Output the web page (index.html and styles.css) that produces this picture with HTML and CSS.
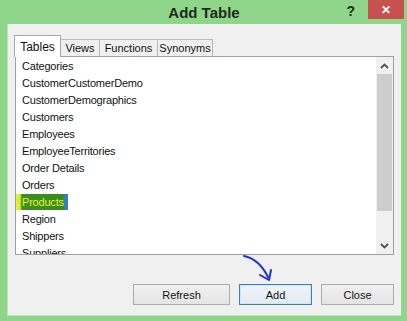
FILE: index.html
```html
<!DOCTYPE html>
<html lang="en">
<head>
  <meta charset="UTF-8" />
  <title>Add Table</title>
  <link rel="stylesheet" href="styles.css">
</head>
<body>
  <div class="window">
    <!-- Title bar -->
    <div class="titlebar">
      <span class="title">Add Table</span>
      <span class="help">?</span>
      <span class="close">&#x2715;</span>
    </div>

    <div class="client">
      <!-- Tabs -->
      <div class="tabs">
        <div class="tab active tab-tables">Tables</div>
        <div class="tab tab-views">Views</div>
        <div class="tab tab-functions">Functions</div>
        <div class="tab tab-synonyms">Synonyms</div>
      </div>

      <!-- Table list -->
      <div class="listbox">
        <ul class="items">
          <li>Categories</li>
          <li>CustomerCustomerDemo</li>
          <li>CustomerDemographics</li>
          <li>Customers</li>
          <li>Employees</li>
          <li>EmployeeTerritories</li>
          <li>Order Details</li>
          <li>Orders</li>
          <li><span class="selected">Products</span></li>
          <li>Region</li>
          <li>Shippers</li>
          <li>Suppliers</li>
        </ul>
        <div class="scrollbar">
          <div class="arrow">
            <svg width="9" height="6" viewBox="0 0 9 6"><path d="M1 5 L4.5 1.5 L8 5" fill="none" stroke="#505050" stroke-width="1.8"/></svg>
          </div>
          <div class="track"><div class="thumb"></div></div>
          <div class="arrow">
            <svg width="9" height="6" viewBox="0 0 9 6"><path d="M1 1 L4.5 4.5 L8 1" fill="none" stroke="#505050" stroke-width="1.8"/></svg>
          </div>
        </div>
      </div>

      <!-- Buttons -->
      <div class="buttons">
        <button class="btn btn-refresh">Refresh</button>
        <button class="btn btn-add default">Add</button>
        <button class="btn btn-close">Close</button>
      </div>

      <!-- Hand drawn annotation arrow -->
      <svg class="annotation" width="40" height="32" viewBox="0 0 40 32">
        <path d="M2 3 C 12 5, 20 12, 26 24" fill="none" stroke="#1f2fd8" stroke-width="2" stroke-linecap="round"/>
        <path d="M18 22 L27 27 L29 17" fill="none" stroke="#1f2fd8" stroke-width="2" stroke-linecap="round" stroke-linejoin="round"/>
      </svg>
    </div>
  </div>
</body>
</html>
```

FILE: styles.css
```css
html, body {
  margin: 0;
  padding: 0;
}
body {
  width: 407px;
  height: 321px;
  overflow: hidden;
  font-family: "Liberation Sans", Arial, sans-serif;
}
.window {
  width: 407px;
  height: 321px;
  box-sizing: border-box;
  background: #8fd68a;
  display: flex;
  flex-direction: column;
  padding: 0 6px 5px 7px;
}
.titlebar {
  height: 24px;
  flex: none;
  position: relative;
  display: flex;
  justify-content: center;
  align-items: center;
}
.title {
  font-weight: bold;
  font-size: 15px;
  color: #1e2a1e;
  margin-top: 1px;
}
.help {
  position: absolute;
  right: 46px;
  top: 3px;
  font-weight: bold;
  font-size: 14px;
  color: #1e2a1e;
}
.close {
  position: absolute;
  right: -3px;
  top: 0;
  width: 36px;
  height: 19px;
  background: #c75050;
  color: #fff;
  font-size: 12px;
  font-weight: bold;
  display: flex;
  justify-content: center;
  align-items: center;
}
.client {
  flex: 1;
  background: #f0f0f0;
  position: relative;
  padding: 11px 7px 0 7px;
  display: flex;
  flex-direction: column;
  border-left: 1px solid #b9e8b5;
  border-bottom: 1px solid #b9e8b5;
  box-sizing: border-box;
}
.tabs {
  display: flex;
  align-items: flex-end;
  height: 21px;
  margin-left: -1px;
}
.tab {
  font-size: 11px;
  color: #111;
  height: 17px;
  box-sizing: border-box;
  border: 1px solid #b9b9b9;
  border-bottom: none;
  background: #f0f0f0;
  display: flex;
  align-items: center;
  justify-content: center;
  margin-left: -1px;
}
.tab.active {
  height: 21px;
  background: #fff;
  border-color: #a9a9a9;
  font-size: 12px;
  position: relative;
  z-index: 1;
  margin-bottom: -1px;
  height: 22px;
  margin-left: 0;
}
.tab-tables { width: 47px; }
.tab-views { width: 40px; }
.tab-functions { width: 59px; }
.tab-synonyms { width: 56px; }

.listbox {
  height: 199px;
  box-sizing: border-box;
  border: 1px solid #a0a0a0;
  background: #fff;
  display: flex;
  overflow: hidden;
  margin-right: 0;
}
.items {
  list-style: none;
  margin: 0;
  padding: 1px 0 0 0;
  flex: 1;
}
.items li {
  height: 17px;
  line-height: 17px;
  font-size: 11px;
  letter-spacing: -0.2px;
  color: #111;
  padding-left: 6px;
}
.selected {
  display: inline-block;
  margin-left: -7px;
  padding: 0 4px 0 7px;
  height: 16px;
  line-height: 16px;
  color: #e2f23a;
  background: linear-gradient(90deg, #e8f23c 0, #d8ea30 5px, #3f8f1e 7px, #3a8a1c 48px, #2f7fd0 50px);
}
.scrollbar {
  width: 17px;
  flex: none;
  background: #f0f0f0;
  display: flex;
  flex-direction: column;
}
.arrow {
  height: 17px;
  flex: none;
  display: flex;
  align-items: center;
  justify-content: center;
}
.track {
  flex: 1;
  padding: 0 1px;
}
.thumb {
  height: 137px;
  background: #cdcdcd;
}
.buttons {
  display: flex;
  justify-content: flex-end;
  gap: 9px;
  margin-top: 29px;
  padding-right: 0;
}
.btn {
  height: 21px;
  font-family: "Liberation Sans", Arial, sans-serif;
  font-size: 11px;
  color: #111;
  border: 1px solid #acacac;
  background: linear-gradient(#f0f0f0, #e5e5e5);
  padding: 0;
}
.btn-refresh { width: 97px; }
.btn-add { width: 73px; }
.btn-close { width: 73px; }
.btn.default {
  border-color: #3c7fb1;
  box-shadow: inset 0 0 0 1px #cfe6f7;
  background: linear-gradient(#eef4f9, #e3ecf3);
}
.annotation {
  position: absolute;
  left: 234px;
  top: 229px;
}
```
